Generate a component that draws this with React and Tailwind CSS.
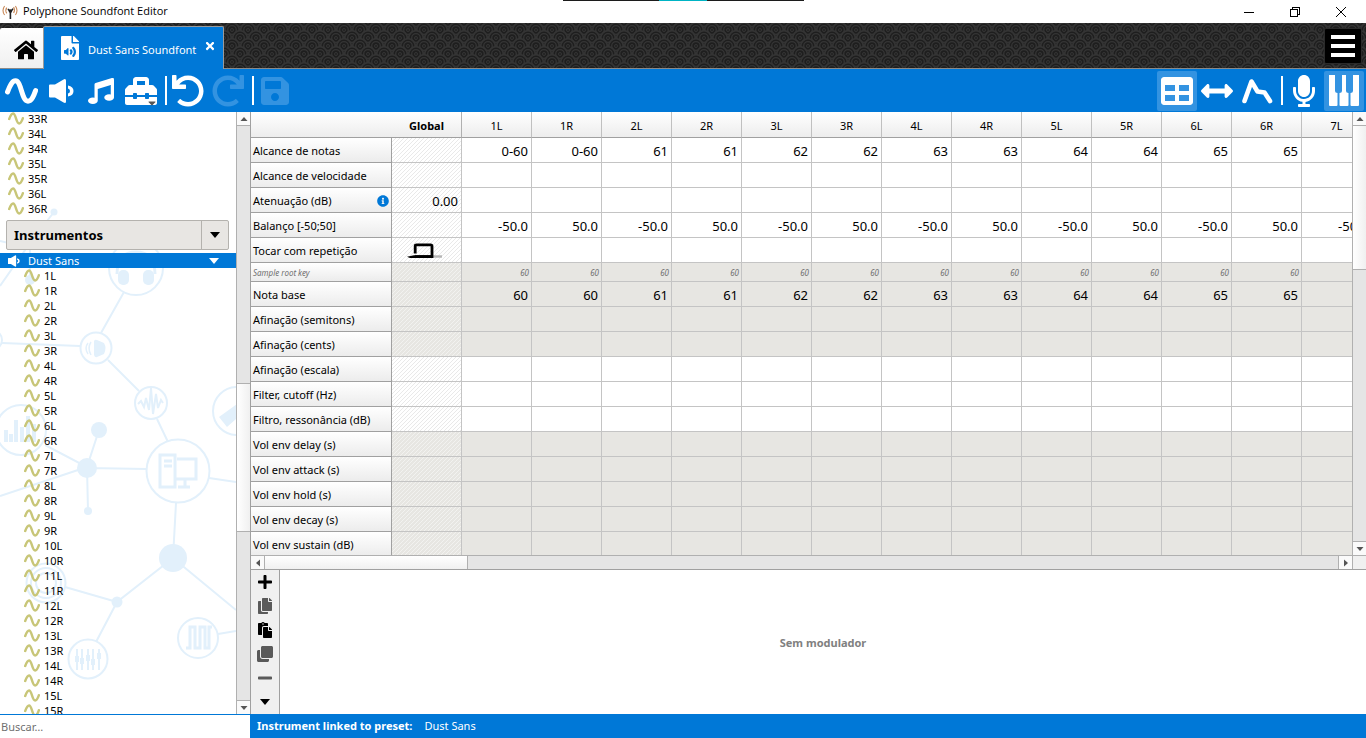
import {
  FaHome,
  FaMusic,
  FaToolbox,
  FaUndo,
  FaSave,
  FaTable,
  FaArrowsAltH,
  FaMicrophone,
  FaCopy,
  FaPaste,
  FaClone,
  FaPlus,
  FaMinus,
  FaInfoCircle,
  FaFileAudio,
  FaTimes,
  FaCaretDown,
} from "react-icons/fa";

const samples = ["33R", "34L", "34R", "35L", "35R", "36L", "36R"];

const children = [];
for (let i = 1; i <= 15; i++) {
  children.push(i + "L", i + "R");
}

const columns = ["1L", "1R", "2L", "2R", "3L", "3R", "4L", "4R", "5L", "5R", "6L", "6R", "7L"];
const keys = ["60", "60", "61", "61", "62", "62", "63", "63", "64", "64", "65", "65", "66"];
const pans = columns.map((c) => (c.endsWith("L") ? "-50.0" : "50.0"));

const rows = [
  { label: "Alcance de notas", values: keys.map((k) => (k === "60" ? "0-60" : k)) },
  { label: "Alcance de velocidade" },
  { label: "Atenuação (dB)", global: "0.00", info: true },
  { label: "Balanço [-50;50]", values: pans },
  { label: "Tocar com repetição", loop: true },
  { label: "Sample root key", values: columns.map(() => "60"), small: true, gray: true },
  { label: "Nota base", values: keys, gray: true },
  { label: "Afinação (semitons)", gray: true },
  { label: "Afinação (cents)", gray: true },
  { label: "Afinação (escala)" },
  { label: "Filter, cutoff (Hz)" },
  { label: "Filtro, ressonância (dB)" },
  { label: "Vol env delay (s)", gray: true },
  { label: "Vol env attack (s)", gray: true },
  { label: "Vol env hold (s)", gray: true },
  { label: "Vol env decay (s)", gray: true },
  { label: "Vol env sustain (dB)", gray: true },
];

function Wave({ className }) {
  return (
    <svg viewBox="0 0 33 26" className={className} fill="none" stroke="currentColor" strokeWidth="5" strokeLinecap="round">
      <path d="M2.5 14 C5 7.5 7 2.8 10.5 2.8 C16.5 2.8 16.5 23.2 23 23.2 C27 23.2 29 17 30.6 12.5" />
    </svg>
  );
}

function Speaker({ className }) {
  return (
    <svg viewBox="0 0 25 24" className={className} fill="currentColor">
      <path d="M1 5.5 H6 L14.6 0.4 Q17 -0.6 17 1.6 V22.4 Q17 24.6 14.6 23.6 L6 18.5 H1 Q0 18.5 0 17.5 V6.5 Q0 5.5 1 5.5 Z" />
      <path d="M19 6.5 Q24.5 7.5 24.5 12 Q24.5 16.5 19 17.5 V14.5 Q21 14 21 12 Q21 10 19 9.5 Z" />
    </svg>
  );
}

function Antenna() {
  return (
    <svg viewBox="0 0 16 16" className="size-4" fill="none">
      <g stroke="#c98a5a" strokeWidth="1.1">
        <path d="M2.6 2 Q-0.6 6.5 2.6 11" />
        <path d="M4.8 3.6 Q2.8 6.5 4.8 9.4" />
        <path d="M13.4 2 Q16.6 6.5 13.4 11" />
        <path d="M11.6 3 Q13.4 6 11.6 9" />
      </g>
      <path d="M6 5 L8.6 8 L11 4.6" stroke="#222" strokeWidth="1.6" />
      <circle cx="8.4" cy="7" r="1.8" fill="#222" />
      <path d="M8.4 8 V15" stroke="#222" strokeWidth="1.6" />
    </svg>
  );
}

function Envelope() {
  return (
    <svg viewBox="0 0 32 28" className="h-7 w-8" fill="none" stroke="currentColor" strokeWidth="4.6" strokeLinecap="round" strokeLinejoin="round">
      <path d="M3.5 24 L10.5 4.5 L16.5 14.5 L23.5 15.5 L29 24" />
    </svg>
  );
}

function Piano() {
  return (
    <svg viewBox="0 0 32 32" className="size-8" fill="currentColor">
      <path d="M1 0 H7 V16 Q7 18 9.5 18 V30 Q9.5 31 8.5 31 H2 Q1 31 1 30 Z" />
      <path d="M14 0 H18 V16 Q18 18 20.5 18 V30 Q20.5 31 19.5 31 H12.5 Q11.5 31 11.5 30 V18 Q14 18 14 16 Z" />
      <path d="M25 0 H31 V30 Q31 31 30 31 H23.5 Q22.5 31 22.5 30 V18 Q25 18 25 16 Z" />
    </svg>
  );
}

function Loop() {
  return (
    <svg viewBox="0 0 36 16" className="mx-auto h-4 w-9" fill="none">
      <path d="M25 13.5 H35" stroke="#b5b5b5" strokeWidth="2.4" />
      <path d="M0 13.8 L7 12.2 H25 V15 H3 Z" fill="#000" />
      <path d="M8.2 10.5 V3 Q8.2 1.8 9.5 1.8 H23.5 Q25 1.8 25 3.2 V13.6 H8" stroke="#000" strokeWidth="2.8" />
    </svg>
  );
}

// Overlapping scales behind the tabs
function Scales() {
  const centers = [[8, -9], [0, -1], [16, -1], [8, 7], [0, 15], [16, 15], [8, 23]];
  return (
    <svg className="absolute inset-0 size-full" aria-hidden="true">
      <defs>
        <pattern id="scales" width="16" height="16" patternUnits="userSpaceOnUse">
          <rect width="16" height="16" fill="#1e1e1e" />
          {centers.map(([x, y]) => (
            <g key={x + "," + y} fill="#1e1e1e" stroke="#343434">
              <circle cx={x} cy={y} r="7.2" strokeWidth="1.6" />
              <circle cx={x} cy={y} r="4.3" strokeWidth="1.3" />
              <circle cx={x} cy={y} r="1.5" strokeWidth="1" />
            </g>
          ))}
        </pattern>
      </defs>
      <rect width="100%" height="100%" fill="url(#scales)" />
    </svg>
  );
}

function Network() {
  return (
    <svg viewBox="0 112 236 602" className="absolute bottom-0 left-0 h-[602px] w-[236px]" fill="none" stroke="#e2f0fb" strokeWidth="2" aria-hidden="true">
      <path d="M54 212 L30 243 L0 286 M0 241 L30 248 V280 M124 292 L101 333 M2 343 L80 346 M108 360 L139 391 M157 419 L168 442" />
      <path d="M45 445 L87 467 L0 496 M99 430 L87 467 L88 511 M87 468 L147 469 M209 478 L236 482 M176 503 L173 558" />
      <path d="M173 558 L117 602 L96 642 M117 602 L65 587 M173 558 L236 610 M218 634 L236 631" />
      <g fill="#fff">
        <circle cx="136" cy="268" r="27" />
        <circle cx="-8" cy="340" r="10" />
        <circle cx="96" cy="348" r="15.5" />
        <circle cx="151" cy="403" r="16" />
        <circle cx="178" cy="471" r="31.5" />
        <circle cx="237" cy="411" r="24" />
        <circle cx="21" cy="430" r="25" />
        <circle cx="46" cy="583" r="19.5" />
        <circle cx="46" cy="583" r="15" />
        <circle cx="46" cy="583" r="10" />
        <circle cx="88" cy="659" r="19.5" />
        <circle cx="198" cy="638" r="20" />
      </g>
      <g fill="#e2f0fb" stroke="none">
        <circle cx="54" cy="212" r="3.5" />
        <circle cx="30" cy="280" r="5" />
        <circle cx="87" cy="468" r="10" />
        <circle cx="99" cy="430" r="8" />
        <circle cx="88" cy="511" r="4" />
        <circle cx="173" cy="558" r="14" />
        <circle cx="117" cy="602" r="5.5" />
        <path d="M94 341 Q95 339 97 340 L104 343 Q107 348 104 354 L97 357 Q95 358 94 355 Z" />
        <rect x="118" y="270" width="11" height="15" rx="5" />
        <rect x="143" y="270" width="11" height="15" rx="5" />
        <path d="M4 430 h4 v12 h-4z M9 434 h4 v8 h-4z M14 420 h4 v22 h-4z M20 427 h4 v15 h-4z M26 416 h4 v26 h-4z M32 424 h4 v18 h-4z" />
        <path d="M219 417 l18 -13 v14 l-10 9z" />
      </g>
      <path d="M117 274 Q117 252 136 252 Q155 252 155 274" strokeWidth="3" />
      <path d="M91 342 Q87 348 91 355 M88 343 Q84 348 88 354" strokeWidth="1.5" />
      <path d="M138 404 l3 -3 3 6 2 -9 3 12 2 -22 2 26 3 -20 2 14 3 -8 2 3" strokeWidth="2" />
      <g strokeWidth="3">
        <rect x="160" y="455" width="15" height="32" />
        <path d="M164 461 h8 M164 466 h8 M177 459 h19 v20 h-20 M185 480 v6 M178 487 h12" />
      </g>
      <path d="M77 649 V670 M82 649 V670 M88 649 V670 M93 649 V670 M99 649 V670" strokeWidth="2" />
      <path d="M77 656 v6 M82 658 v6 M88 655 v6 M93 659 v6 M99 653 v6" strokeWidth="4" />
      <path d="M186 648 h4 V627 h5 V648 h5 V627 h5 V648 h4 V627 h3" strokeWidth="3" />
    </svg>
  );
}

function Arrow({ className }) {
  return (
    <svg viewBox="0 0 8 8" className={"size-2 " + className} fill="#555" aria-hidden="true">
      <path d="M0.5 6 L4 2 L7.5 6 Z" />
    </svg>
  );
}

function ScrollButton({ label, className, arrow = "" }) {
  return (
    <button aria-label={label} className={"flex shrink-0 items-center justify-center bg-[#fafafa] " + className}>
      <Arrow className={arrow} />
    </button>
  );
}

function ToolButton({ label, active, disabled, children }) {
  return (
    <button
      aria-label={label}
      disabled={disabled}
      className={
        "relative flex h-10 w-10 items-center justify-center " +
        (active ? "rounded-xs bg-[#3393e1] " : "") +
        (disabled ? "text-[#3393e1]" : "text-white")
      }
    >
      {children}
    </button>
  );
}

function Separator() {
  return (
    <div className="flex w-[7px] justify-end pr-px">
      <div className="h-[29px] w-[2px] bg-white" />
    </div>
  );
}

function TitleBar() {
  return (
    <header className="relative flex h-[23px] shrink-0 items-center bg-white px-[2px] font-['Open_Sans','Noto_Sans',sans-serif]">
      <Antenna />
      <h1 className="flex-1 pl-[5px] text-[11px]">Polyphone Soundfont Editor</h1>
      <div className="absolute inset-x-0 top-0 flex h-px justify-center">
        <div className="flex w-[241px] justify-center bg-[#1c1c1c]">
          <div className="w-12 bg-[#00b4c4]" />
        </div>
      </div>
      <button aria-label="Minimizar" className="flex h-full w-[46px] items-center justify-center">
        <svg viewBox="0 0 10 10" className="size-[10px]" stroke="#000" shapeRendering="crispEdges"><path d="M0 5.5 H10" /></svg>
      </button>
      <button aria-label="Restaurar" className="flex h-full w-[46px] items-center justify-center">
        <svg viewBox="0 0 10 10" className="size-[10px]" stroke="#000" fill="none" shapeRendering="crispEdges"><path d="M0.5 2.5 H7.5 V9.5 H0.5 Z M2.5 2.5 V0.5 H9.5 V7.5 H7.5" /></svg>
      </button>
      <button aria-label="Fechar" className="flex h-full w-[46px] items-center justify-center">
        <svg viewBox="0 0 10 10" className="size-[10px]" stroke="#000"><path d="M0 0 L10 10 M10 0 L0 10" /></svg>
      </button>
    </header>
  );
}

function TabBar() {
  return (
    <nav className="relative h-[46px] shrink-0">
      <Scales />
      <div className="relative flex h-full items-end border-b border-[#8a8a8a]">
        <button aria-label="Início" className="flex h-10 w-[43px] items-center justify-center rounded-tl-xs bg-linear-to-b from-white to-[#f0f0f0] pt-1 pl-2">
          <FaHome className="size-6" />
        </button>
        <div className="-mb-px flex h-[43px] w-[181px] items-center rounded-t-xs border-x border-t border-[#9a9a9a] bg-[#0078d7] pl-4 text-white">
          <FaFileAudio className="h-6 w-5" />
          <span className="flex-1 pt-1 pl-2 text-[11px] whitespace-nowrap">Dust Sans Soundfont</span>
          <button aria-label="Fechar aba" className="mr-[3px] mb-1 p-1">
            <FaTimes className="size-3" />
          </button>
        </div>
        <button aria-label="Menu" className="mr-1 mb-[4px] ml-auto flex h-9 w-[38px] flex-col items-center justify-center gap-[5px] rounded-xs border border-[#2a2a2a] bg-black">
          <span className="h-1 w-6 bg-white" />
          <span className="h-1 w-6 bg-white" />
          <span className="h-1 w-6 bg-white" />
        </button>
      </div>
    </nav>
  );
}

function ToolBar() {
  return (
    <div className="flex h-[43px] shrink-0 items-center bg-[#0078d7] pr-[2px] pl-px">
      <ToolButton label="Amostra"><Wave className="h-[26px] w-[33px]" /></ToolButton>
      <ToolButton label="Instrumento"><Speaker className="h-6 w-[25px]" /></ToolButton>
      <ToolButton label="Predefinição"><FaMusic className="size-[26px]" /></ToolButton>
      <ToolButton label="Ferramentas">
        <FaToolbox className="size-8" />
        <FaCaretDown className="absolute right-[3px] bottom-[2px] size-3 text-[#555]" />
      </ToolButton>
      <Separator />
      <ToolButton label="Desfazer"><FaUndo className="size-8" /></ToolButton>
      <ToolButton label="Refazer" disabled><FaUndo className="size-8 -scale-x-100" /></ToolButton>
      <Separator />
      <ToolButton label="Salvar" disabled><FaSave className="size-8" /></ToolButton>
      <div className="flex-1" />
      <ToolButton label="Tabela" active><FaTable className="size-8" /></ToolButton>
      <ToolButton label="Alcances"><FaArrowsAltH className="size-8" /></ToolButton>
      <ToolButton label="Envelopes"><Envelope /></ToolButton>
      <Separator />
      <ToolButton label="Gravador"><FaMicrophone className="size-8" /></ToolButton>
      <ToolButton label="Teclado" active><Piano /></ToolButton>
    </div>
  );
}

function Sidebar() {
  return (
    <aside className="flex w-[250px] shrink-0 flex-col">
      <div className="flex min-h-0 flex-1">
        <div className="relative min-w-0 flex-1 overflow-hidden bg-white">
          <Network />
          <div className="relative -mt-px text-[11px] leading-[15px]">
            <ul>
              {samples.map((s) => (
                <li key={s} className="flex h-[15px] items-center gap-1 pl-2">
                  <Wave className="h-[13px] w-4 text-[#c8c678]" />
                  {s}
                </li>
              ))}
            </ul>
            <div className="mt-1 mr-[7px] mb-[3px] ml-[6px] flex h-[30px] rounded-xs border border-[#b4b2ae] bg-[#e8e6e3]">
              <button className="flex-1 pl-[7px] text-left text-[13px] font-bold">Instrumentos</button>
              <button aria-label="Opções" className="flex w-[27px] items-center justify-center border-l border-[#b4b2ae]">
                <svg viewBox="0 0 10 6" className="h-[6px] w-[10px]"><path d="M0 0 H10 L5 6 Z" /></svg>
              </button>
            </div>
            <div className="flex h-[15px] items-center bg-[#0078d7] pr-[17px] pl-2 text-white">
              <Speaker className="h-3 w-3" />
              <span className="flex-1 pl-2">Dust Sans</span>
              <svg viewBox="0 0 10 6" className="h-[6px] w-[10px]" fill="currentColor"><path d="M0 0 H10 L5 6 Z" /></svg>
            </div>
            <ul>
              {children.map((c) => (
                <li key={c} className="flex h-[15px] items-center gap-1 pl-6">
                  <Wave className="h-[13px] w-4 text-[#c8c678]" />
                  {c}
                </li>
              ))}
            </ul>
          </div>
        </div>
        <div className="flex w-[14px] flex-col border-l border-[#b0b0b0] bg-[#e5e5e5]">
          <ScrollButton label="Subir" className="h-[14px] border-b border-[#b0b0b0]" />
          <div className="grow-[258]" />
          <div className="grow-[148] border-y border-[#b0b0b0] bg-linear-to-r from-white to-[#f0f0f0]" />
          <div className="grow-[169]" />
          <ScrollButton label="Descer" className="h-[14px] border-t border-[#b0b0b0]" arrow="rotate-180" />
        </div>
      </div>
      <input
        type="text"
        aria-label="Buscar"
        placeholder="Buscar…"
        className="h-6 w-full shrink-0 border-t border-[#0078d7] bg-white px-px text-[11px] outline-none placeholder:text-[#707070]"
      />
    </aside>
  );
}

function GridTable() {
  return (
    <div className="min-w-0 flex-1 overflow-hidden">
      <table className="w-[1121px] table-fixed border-separate border-spacing-0">
        <thead>
          <tr className="h-[26px] bg-linear-to-b from-white to-[#ececec] text-[11px] leading-4">
            <td className="w-[141px] border-b border-[#a0a0a0]" />
            <th scope="col" className="w-[70px] border-r border-b border-[#b0b0b0] border-b-[#a0a0a0] p-0 pt-[3px] font-bold">Global</th>
            {columns.map((c) => (
              <th key={c} scope="col" className="w-[70px] border-r border-b border-[#c0c0c0] border-b-[#a0a0a0] p-0 pt-[3px] font-normal">
                {c}
              </th>
            ))}
          </tr>
        </thead>
        <tbody>
          {rows.map((row) => (
            <tr key={row.label} className={row.small ? "h-[19px]" : "h-[25px]"}>
              <th
                scope="row"
                className={
                  "border-r border-b border-[#a0a0a0] bg-linear-to-b from-white to-[#ececec] p-0 pt-[2px] pl-[2px] text-left font-normal whitespace-nowrap " +
                  (row.small ? "text-[8px] leading-4 text-[#707070] italic" : "text-[11px] leading-5")
                }
              >
                <div className="flex items-center justify-between pr-[2px]">
                  {row.label}
                  {row.info && <FaInfoCircle className="size-3 text-[#0078d7]" />}
                </div>
              </th>
              <td
                className={
                  "border-r border-b border-[#c4c4c4] bg-size-[4px_4px] p-0 pt-[2px] pr-[3px] text-right text-[13px] leading-5 " +
                  (row.gray
                    ? "bg-[linear-gradient(135deg,#f2f2f0_12%,#e7e6e2_12%,#e7e6e2_38%,#f2f2f0_38%,#f2f2f0_62%,#e7e6e2_62%,#e7e6e2_88%,#f2f2f0_88%)]"
                    : "bg-[linear-gradient(135deg,#e9e9e9_12%,#fff_12%,#fff_38%,#e9e9e9_38%,#e9e9e9_62%,#fff_62%,#fff_88%,#e9e9e9_88%)]")
                }
              >
                {row.global}
                {row.loop && <Loop />}
              </td>
              {columns.map((c, i) => (
                <td
                  key={c}
                  className={
                    "border-r border-b border-[#c4c4c4] p-0 pt-[2px] text-right " +
                    (row.gray ? "bg-[#e7e6e2] " : "bg-white ") +
                    (row.small ? "pr-[2px] text-[8px] leading-4 text-[#707070] italic" : "pr-[3px] text-[13px] leading-5")
                  }
                >
                  {row.values && row.values[i]}
                </td>
              ))}
            </tr>
          ))}
        </tbody>
      </table>
    </div>
  );
}

function Modulators() {
  return (
    <section className="flex h-36 shrink-0 bg-white">
      <div className="flex w-[29px] flex-col items-center border-r border-[#a0a0a0] bg-[#f0f0f0]">
        <button aria-label="Adicionar" className="flex h-6 items-center"><FaPlus className="size-4" /></button>
        <button aria-label="Copiar" className="flex h-6 items-center text-[#5a5a5a]"><FaCopy className="size-4" /></button>
        <button aria-label="Colar" className="flex h-6 items-center"><FaPaste className="size-4" /></button>
        <button aria-label="Duplicar" className="flex h-6 items-center text-[#5a5a5a]"><FaClone className="size-4" /></button>
        <button aria-label="Remover" className="flex h-6 items-center text-[#5a5a5a]"><FaMinus className="size-4" /></button>
        <button aria-label="Mais" className="flex h-6 items-center">
          <svg viewBox="0 0 10 6" className="h-[6px] w-[10px]"><path d="M0 0 H10 L5 6 Z" /></svg>
        </button>
      </div>
      <p className="flex flex-1 items-center justify-center pt-[2px] text-[11px] font-bold text-[#808080]">Sem modulador</p>
    </section>
  );
}

export default function App() {
  return (
    <div className="flex h-screen flex-col overflow-hidden bg-white font-['Noto_Sans','Open_Sans',sans-serif] text-black">
      <TitleBar />
      <TabBar />
      <ToolBar />
      <div className="flex min-h-0 flex-1">
        <Sidebar />
        <main className="flex min-w-0 flex-1 flex-col">
          <div className="flex min-h-0 flex-1 flex-col border-b border-l border-[#a0a0a0]">
            <div className="flex min-h-0 flex-1">
              <GridTable />
              <div className="flex w-[14px] flex-col border-l border-[#b0b0b0] bg-[#e5e5e5]">
                <ScrollButton label="Subir tabela" className="h-[14px] border-b border-[#b0b0b0]" />
                <div className="grow-[144] border-b border-[#b0b0b0] bg-linear-to-r from-white to-[#f0f0f0]" />
                <div className="grow-[272]" />
                <ScrollButton label="Descer tabela" className="h-[14px] border-t border-[#b0b0b0]" arrow="rotate-180" />
              </div>
            </div>
            <div className="flex h-[14px] shrink-0 border-t border-[#b0b0b0] bg-[#e5e5e5]">
              <ScrollButton label="Esquerda" className="w-[14px] border-r border-[#b0b0b0]" arrow="-rotate-90" />
              <div className="grow-[202] border-r border-[#b0b0b0] bg-linear-to-b from-white to-[#f0f0f0]" />
              <div className="grow-[872]" />
              <ScrollButton label="Direita" className="w-[14px] border-l border-[#b0b0b0]" arrow="rotate-90" />
              <div className="w-[14px] border-l border-[#b0b0b0] bg-[#f0f0f0]" />
            </div>
          </div>
          <div className="border-l border-[#a0a0a0]">
            <Modulators />
          </div>
          <footer className="flex h-6 shrink-0 items-center gap-3 bg-[#0078d7] px-[7px] pt-px text-[11px] text-white">
            <strong>Instrument linked to preset:</strong>
            <span>Dust Sans</span>
          </footer>
        </main>
      </div>
    </div>
  );
}
